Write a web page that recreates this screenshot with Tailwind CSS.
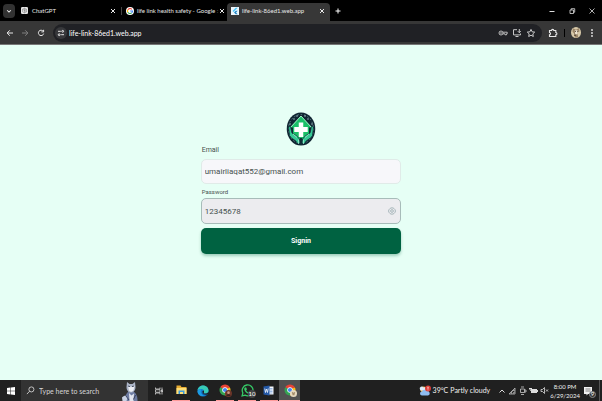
<!DOCTYPE html>
<html lang="en">
<head>
<meta charset="utf-8">
<meta name="viewport" content="width=device-width, initial-scale=1">
<title>life-link-86ed1.web.app</title>
<script src="https://cdn.jsdelivr.net/npm/@tailwindcss/browser@4"></script>
</head>
<body class="flex min-h-screen flex-col bg-[#e6fff5] font-['Lato',sans-serif] text-[7px] leading-none">
<svg class="hidden" aria-hidden="true">
  <symbol id="x" viewBox="0 0 8 8"><path d="M2 2l4 4M6 2L2 6" stroke="currentColor" stroke-width="1" fill="none"/></symbol>
  <symbol id="chrome" viewBox="0 0 24 24">
    <path d="M12 12L2.5 6.5A11 11 0 0 1 21.5 6.5z" fill="#e94335"/>
    <path d="M12 12L21.5 6.5A11 11 0 0 1 12 23z" fill="#fbc116"/>
    <path d="M12 12V23A11 11 0 0 1 2.5 6.5z" fill="#34a353"/>
    <path d="M12 6.500H21.500V8H12z" fill="#e94335"/>
    <circle cx="12" cy="12" r="5.500" fill="#fff"/><circle cx="12" cy="12" r="4.200" fill="#4285f4"/>
  </symbol>
</svg>

<header class="shrink-0 bg-black text-[#e8e8e8]">
  <div class="flex h-[21px] items-center">
    <button aria-label="Search tabs" class="ml-[3px] flex h-[14px] w-[12px] shrink-0 items-center justify-center rounded bg-[#323232]">
      <svg class="size-[6px]" viewBox="0 0 8 8"><path d="M1.500 3l2.500 2.500L6.500 3" fill="none" stroke="currentColor" stroke-width="1.400"/></svg>
    </button>
    <nav class="flex h-full min-w-0 items-center" aria-label="Tabs">
      <div class="flex h-full w-[106px] items-center gap-1 pl-[6px] pr-1">
        <svg class="size-[7px] shrink-0" viewBox="0 0 16 16"><rect width="16" height="16" rx="3" fill="#e6e6e6"/><g fill="none" stroke="#777" stroke-width="1.200"><path d="M8 2.500l4.500 2.700v5.600L8 13.500l-4.500-2.700V5.200z"/><path d="M8 2.500v5.300l4.500 3M3.500 5.200L8 7.800M8 13.500V7.800l4.500-2.600"/></g></svg>
        <a href="#" class="flex-1 whitespace-nowrap text-[6px] leading-[10px]">ChatGPT</a>
        <button aria-label="Close ChatGPT"><svg class="size-[8px]"><use href="#x"/></svg></button>
      </div>
      <span class="h-[8px] w-px bg-[#444]"></span>
      <div class="flex h-full w-[105px] items-center pl-[4px] pr-[5px]">
        <svg class="mr-[3px] size-[8px] shrink-0" viewBox="0 0 24 24"><circle cx="12" cy="12" r="12" fill="#fff"/><g fill="none" stroke-width="3.400"><path d="M5.500 8.500A7.500 7.500 0 0 1 17.500 7" stroke="#ea4335"/><path d="M5.500 15.700a7.500 7.500 0 0 1 0-7.400" stroke="#fbbc05"/><path d="M17 17.600A7.500 7.500 0 0 1 5.500 15.500" stroke="#34a853"/><path d="M12.500 12h7a7.500 7.500 0 0 1-2.600 5.700" stroke="#4285f4"/></g></svg>
        <a href="#" class="flex-1 whitespace-nowrap text-[6px] leading-[10px]">life link health safety - Google <span class="text-[#777]">:</span></a>
        <button aria-label="Close Google Search"><svg class="size-[8px]"><use href="#x"/></svg></button>
      </div>
      <div class="mt-[3px] flex h-[18px] w-[103px] items-center gap-[3px] rounded-t-[4px] bg-[#373737] pb-[3px] pl-[4px] pr-[4px]">
        <svg class="size-[8px] shrink-0" viewBox="0 0 16 16"><rect width="16" height="16" fill="#eef6fb"/><path d="M9.500 1.500L3 8l2 2 8.500-8.500z" fill="#47c5fb"/><path d="M9.500 7.500L6 11l3.500 3.500h4L10 11l3.500-3.500z" fill="#2489c9"/></svg>
        <a href="#" class="flex-1 whitespace-nowrap text-[6px] leading-[10px]">life-link-86ed1.web.app</a>
        <button aria-label="Close life-link"><svg class="size-[8px]"><use href="#x"/></svg></button>
      </div>
    </nav>
    <button aria-label="New tab" class="ml-[4px]"><svg class="size-[8px]" viewBox="0 0 8 8"><path d="M4 1.500v5M1.500 4h5" stroke="#fff"/></svg></button>
    <div class="ml-auto flex shrink-0 gap-[12px] pr-[6px]">
      <button aria-label="Minimize"><svg class="size-[8px]" viewBox="0 0 8 8"><path d="M1.500 4.500h5" stroke="#ddd"/></svg></button>
      <button aria-label="Restore"><svg class="size-[8px]" viewBox="0 0 8 8" fill="none" stroke="#ddd" stroke-width=".8"><path d="M2 3h3.500v3.500H2zM3.200 3V1.700h3.500v3.500H5.500"/></svg></button>
      <button aria-label="Close window"><svg class="size-[8px]" viewBox="0 0 8 8"><path d="M1.500 1.500l5 5M6.500 1.500l-5 5" stroke="#ddd" stroke-width=".8"/></svg></button>
    </div>
  </div>

  <div class="flex h-[24px] items-center border-b border-[#777] bg-[#373737] pl-[5px] pr-[5px]">
    <div class="flex gap-[5px]">
      <button aria-label="Back"><svg class="size-[10px]" viewBox="0 0 10 10" fill="none" stroke="#e8e8e8"><path d="M8 5H2.200M4.800 2.300L2.100 5l2.700 2.700"/></svg></button>
      <button aria-label="Forward"><svg class="size-[10px]" viewBox="0 0 10 10" fill="none" stroke="#808080"><path d="M2 5h5.800M5.200 2.300L7.900 5 5.200 7.700"/></svg></button>
      <button aria-label="Reload" class="ml-px"><svg class="size-[10px]" viewBox="0 0 10 10" fill="none" stroke="#e8e8e8"><path d="M7.200 3.200A2.700 2.700 0 1 0 7.700 5.600M7.600 1.800v2.100H5.400"/></svg></button>
    </div>
    <div class="ml-[7px] flex h-[18px] min-w-0 flex-1 items-center rounded-full bg-[#202125] pl-[2px] pr-[6px]">
      <button aria-label="Site information" class="flex size-[12px] shrink-0 items-center justify-center rounded-full bg-[#37383b]"><svg class="size-[8px]" viewBox="0 0 8 8" fill="none" stroke="#e8e8e8"><path d="M1 2.300h2.800M4.200 5.700H7"/><circle cx="5.700" cy="2.300" r=".9"/><circle cx="2.200" cy="5.700" r=".9"/></svg></button>
      <input aria-label="Address" value="life-link-86ed1.web.app" class="ml-[2px] h-[12px] min-w-0 flex-1 bg-transparent text-[7px] text-white outline-none">
      <div class="flex gap-[4px]">
        <button aria-label="Passwords"><svg class="size-[10px]" viewBox="0 0 10 10" fill="none" stroke="#c9c9c9" stroke-width=".9"><circle cx="3" cy="5" r="2"/><circle cx="3" cy="5" r=".4"/><path d="M4.900 4.200h4.300v1.600H8.500v1H7v-1H4.900"/></svg></button>
        <button aria-label="Install app"><svg class="size-[10px]" viewBox="0 0 10 10" fill="none" stroke="#dadada" stroke-width=".9"><path d="M5 1.700H1.500v5.200h7V5.500M3.500 8.500h3M7.300 1v3.500M5.800 3.200l1.500 1.500 1.500-1.500"/></svg></button>
        <button aria-label="Bookmark"><svg class="size-[10px]" viewBox="0 0 10 10" fill="none" stroke="#dadada" stroke-width=".9"><path d="M5 1.400l1.100 2.400 2.600.3-1.900 1.800.5 2.600L5 7.200 2.700 8.500l.5-2.600-1.900-1.800 2.600-.3z"/></svg></button>
      </div>
    </div>
    <div class="flex items-center gap-[6px] pl-[6px]">
      <button aria-label="Extensions"><svg class="size-[10px]" viewBox="0 0 10 10" fill="none" stroke="#e8e8e8" stroke-width="1.100"><path d="M1.500 2.500h2c0-1.500 2.300-1.500 2.300 0h2v2c1.500 0 1.500 2.300 0 2.300v1.700H1.500V6.700c1.400 0 1.400-2.200 0-2.200z"/></svg></button>
      <span class="h-[8px] w-px bg-black"></span>
      <button aria-label="Profile"><svg class="h-[11px] w-[10px]" viewBox="0 0 10 10" preserveAspectRatio="none"><circle cx="5" cy="5" r="5" fill="#d7c9a9"/><path d="M2 1.200l3 1.300L8 1l.5 3-2 1 .6 4.500H4L3 6 1.500 4z" fill="#9a8568"/><path d="M3.800 3h2.700v3.500H4.200z" fill="#f1e7d4"/><path d="M4 4h1M6 4h.7M3 7.500h2" stroke="#3c3027" stroke-width=".8"/></svg></button>
      <button aria-label="Menu"><svg class="size-[10px]" viewBox="0 0 10 10" fill="#e8e8e8"><circle cx="5" cy="2" r=".9"/><circle cx="5" cy="5" r=".9"/><circle cx="5" cy="8" r=".9"/></svg></button>
    </div>
  </div>
</header>

<main class="flex flex-1 flex-col items-center pt-[67px] font-['Roboto',sans-serif]">
  <form class="flex w-1/3 min-w-[200px] flex-col text-[#46514e]">
    <svg class="h-[34px] w-[30px] self-center" viewBox="0 0 60 68" role="img" aria-label="Life Link">
      <ellipse cx="30" cy="34" rx="28.500" ry="33" fill="#102532"/>
      <ellipse cx="30" cy="34" rx="25" ry="29" fill="none" stroke="#5d8085" stroke-width="2" stroke-dasharray="3 4"/>
      <path d="M30 8L52 31H46V46L30 56 14 46V31H8z" fill="#1bbf68"/>
      <path d="M9 31L30 8 51 31" fill="none" stroke="#a4f0c8" stroke-width="2"/>
      <path d="M25.500 21h9v9h9v10h-9v10h-9V40h-9V30h9z" fill="#fff"/>
      <g fill="#36c994" stroke="#0e2c38" stroke-width="1.500"><path d="M5 30c3-2 5 0 5 4l2 8 8 5c6 4 8 8 8 16h-6c0-7-11-8-15-16z"/><path d="M55 30c-3-2-5 0-5 4l-2 8-8 5c-6 4-8 8-8 16h6c0-7 11-8 15-16z"/></g>
      <path d="M14 44l8 7M46 44l-8 7M25 55v9M35 55v9" stroke="#a9eed4" stroke-width="1.500"/>
      <path d="M30 52v14" stroke="#112b36" stroke-width="4"/>
      <g fill="#a7c4c8"><circle cx="16" cy="14" r="1.500"/><circle cx="22" cy="8" r="1.500"/><circle cx="38" cy="8" r="1.500"/><circle cx="44" cy="14" r="1.500"/><circle cx="8" cy="24" r="1.500"/><circle cx="52" cy="24" r="1.500"/></g>
    </svg>
    <label for="email" class="pl-px text-[7px] leading-[8px]">Email</label>
    <input id="email" type="email" value="umairliaqat552@gmail.com" class="mt-[5px] h-[25px] w-full rounded-[5px] border border-[#e0ebe8] bg-[#f7f7fa] px-[3px] text-[8px] outline-none">
    <label for="password" class="mt-[4px] pl-px text-[6px] leading-[8px]">Password</label>
    <div class="mt-[2px] flex h-[26px] items-center rounded-[5px] border border-[#a7bcb9] bg-[#ececef] pr-[4px]">
      <input id="password" type="text" value="12345678" class="h-full min-w-0 flex-1 bg-transparent px-[3px] text-[8px] outline-none">
      <button type="button" aria-label="Hide password"><svg class="size-[8px]" viewBox="0 0 16 16" fill="none" stroke="#91a5a9" stroke-width="1.500"><path d="M1 8c2-8.500 12-8.500 14 0-2 8.500-12 8.500-14 0z"/><circle cx="8" cy="8" r="2.700"/></svg></button>
    </div>
    <button type="submit" class="mt-[4px] h-[26px] rounded-[5px] bg-[#006241] text-[7px] font-bold text-white shadow-[0_2px_3px_#00624150]">Signin</button>
  </form>
</main>

<footer class="flex h-[21px] shrink-0 items-stretch bg-[#202020] text-[#f0f0f0]">
  <button aria-label="Start" class="flex w-[21px] items-center justify-center"><svg class="size-[8px]" viewBox="0 0 16 16" fill="#fff"><path d="M0 2l7-1v6.500H0zM8 .9L16 0v7.500H8zM0 8.500h7V15l-7-1zM8 8.500h8V16l-8-1z"/></svg></button>
  <label class="flex w-[127px] items-center bg-[#333] pl-[5px] pr-[10px]">
    <svg class="size-[9px] shrink-0" viewBox="0 0 10 10" fill="none" stroke="#e0e0e0" stroke-width=".9"><circle cx="6" cy="3.800" r="2.800"/><path d="M4 5.800L1 9"/></svg>
    <input aria-label="Type here to search" placeholder="Type here to search" class="ml-[4px] h-full min-w-0 flex-1 bg-transparent text-[7px] outline-none placeholder:text-[#d6d6d6]">
    <svg class="h-[20px] w-[16px] shrink-0 self-end" viewBox="0 0 32 40"><path d="M5 40c0-10 5-17 9-20l9 1c7 5 8 12 8 19z" fill="#6d7ba1"/><path d="M0 33c5-6 10-4 11 1l-2 6H1z" fill="#c9d2e4"/><path d="M10 2l5 4h6l5-4 1 10c0 7-4 11-9 11s-9-4-9-11z" fill="#acb5c8"/><path d="M12 10c3-2 4 0 6 3 2-3 4-5 7-3l-2 9-5 3-4-3z" fill="#eef0f5"/><path d="M12 10l4 1M20 11l4-1" stroke="#333c52" stroke-width="2"/><path d="M14 24l5 5 5-4-1 15h-8z" fill="#e3e6ef"/><path d="M8 30l6 8M27 28l-4 9" stroke="#37405c" stroke-width="2"/></svg>
  </label>
  <nav class="flex" aria-label="Taskbar">
    <button aria-label="Task view" class="flex w-[22px] items-center justify-center"><svg class="size-[8px]" viewBox="0 0 16 16" fill="none" stroke="#ddd" stroke-width="1.500"><path d="M1 1v3h9V1M1 5.500h9v5H1zM1 15v-3h9v3M14 1v14M13 6h3v3h-3z"/></svg></button>
    <button aria-label="File Explorer" class="flex w-[22px] items-center justify-center"><span class="flex h-full w-[18px] items-center justify-center border-b border-[#ff9b9b]"><svg class="h-[10px] w-[11px]" viewBox="0 0 22 20"><path d="M1 1h8l2 3h10v14H1z" fill="#e8ac32"/><path d="M1 6h20v12H1z" fill="#ffdf78"/><path d="M5 18v-7h12v7h-3v-4H8v4z" fill="#3d9bdc"/></svg></span></button>
    <button aria-label="Edge" class="flex w-[22px] items-center justify-center"><svg class="size-[12px]" viewBox="0 0 24 24"><circle cx="12" cy="12" r="11" fill="#137ccf"/><path d="M1 11C2 4 7 1 12 1c7 0 11 5 11 10 0 4-3 6-7 6-3 0-3-2-2-3 1-4-2-6-6-6-3 0-6 1-7 3z" fill="#38cbb6"/><path d="M9 9c-3 4-1 10 5 12-7 3-13-2-13-9 2-3 5-4 8-3z" fill="#1b9be4"/><path d="M11 11c-3 5 3 10 11 6l-2 3C13 22 7 17 11 11z" fill="#0c4d91"/><path d="M14 14c-1 2 0 3 2 3 3 0 5-1 7-3l-1 4c-6 3-12 0-11-6l3-1z" fill="#202020"/></svg></button>
    <button aria-label="Chrome" class="flex w-[22px] items-center justify-center"><span class="relative flex h-full w-[18px] items-center justify-center border-b border-[#ff9b9b]"><svg class="size-[12px]"><use href="#chrome"/></svg><svg class="absolute bottom-[3px] right-[2px] size-[7px]" viewBox="0 0 8 8"><circle cx="4" cy="4" r="4" fill="#6b3529"/><circle cx="4" cy="3" r="1.500" fill="#c99680"/><path d="M1.500 6.500c1-2 4-2 5 0z" fill="#271c1b"/></svg></span></button>
    <button aria-label="WhatsApp" class="flex w-[22px] items-center justify-center"><span class="relative flex h-full w-[18px] items-center justify-center border-b border-[#ff9b9b]"><svg class="size-[13px]" viewBox="0 0 24 24"><path d="M2 22l1.500-5.500A10 10 0 1 1 7.500 20.500z" fill="none" stroke="#36ca67" stroke-width="2.400"/><path d="M8 6l2 1 1 3-1.500 1.500c1 2 2 3 4 4L15 14l3 1c0 3-2 4-4 3-4-1-7-4-8-8 0-2 0-3 2-4z" fill="#36ca67"/></svg><span class="absolute bottom-[2px] right-0 flex size-[8px] items-center justify-center rounded-full bg-[#444] text-[6px] text-white">10</span></span></button>
    <button aria-label="Word" class="flex w-[21px] items-center justify-center"><span class="flex h-full w-[18px] items-center justify-center border-b border-[#ff9b9b]"><svg class="size-[11px]" viewBox="0 0 22 22"><path d="M9 3h12v16H9z" fill="#f5f8fd"/><path d="M13 7h6M13 10h6M13 13h6M13 16h6" stroke="#3e76c4"/><path d="M1 3l12-2v20L1 19z" fill="#2459a8"/><path d="M3.500 7l1.500 8 2-7 2 7 1.500-8" fill="none" stroke="#fff" stroke-width="1.500"/></svg></span></button>
    <button aria-label="Chrome, active" class="relative flex w-[21px] items-center justify-center border-b border-[#ffadad] bg-[#515151]"><svg class="size-[12px]"><use href="#chrome"/></svg><svg class="absolute bottom-[3px] right-[3px] size-[7px]" viewBox="0 0 8 8"><circle cx="4" cy="4" r="4" fill="#e5d9c0"/><path d="M2 2l2 1 2-1-1 4H3z" fill="#a38c6b"/></svg></button>
  </nav>
  <div class="ml-auto flex items-center">
    <button class="flex items-center gap-[2px] whitespace-nowrap text-[7px]">
      <svg class="size-[12px]" viewBox="0 0 24 24"><circle cx="9" cy="9" r="6" fill="#f6b63e"/><path d="M2 9a4 4 0 0 1 7-4 4 4 0 0 1 5 6H3z" fill="#dcecfb"/><path d="M6 21a4 4 0 0 1 0-8 5 5 0 0 1 9-1 4.500 4.500 0 0 1 3 9z" fill="#8fbcf0"/><circle cx="18" cy="7" r="6" fill="#dc3d37"/><path d="M18 3.500v4M18 9v1.500" stroke="#fff" stroke-width="1.800"/></svg>
      <span>39°C</span><span>Partly cloudy</span>
    </button>
    <div class="ml-[8px] flex items-center gap-[2px]">
      <button aria-label="Hidden icons"><svg class="size-[8px]" viewBox="0 0 8 8" fill="none" stroke="#ddd"><path d="M1.500 5.500L4 3l2.500 2.500"/></svg></button>
      <svg class="size-[8px]" viewBox="0 0 8 8" fill="none" stroke="#bbb" stroke-width=".8"><path d="M1 7L7 1v6zM3 7a4 4 0 0 1 4-4M5 7a2 2 0 0 1 2-2"/></svg>
      <svg class="size-[9px]" viewBox="0 0 9 9" fill="none" stroke="#ccc" stroke-width=".8"><path d="M2.500 3h4v3.500h-4zM3 1h3M3 8.500h3M6.500 4H8v2H6.500"/></svg>
      <svg class="size-[9px]" viewBox="0 0 9 9"><path d="M2 3h6v4H2z" fill="#ddd"/><path d="M8 4h1v2H8zM0 2h3v1.500H0zM1 3v2h1" fill="#ddd"/></svg>
      <svg class="size-[9px]" viewBox="0 0 9 9" fill="none" stroke="#ddd" stroke-width=".8"><path d="M1 3.500h1.500l2-2v6l-2-2H1zM6 3.500l2 2M8 3.500l-2 2"/></svg>
    </div>
    <div class="ml-px whitespace-nowrap text-center text-[6px] leading-[9px]"><div>8:00 PM</div><div>6/29/2024</div></div>
    <button aria-label="Notifications" class="relative ml-[3px] mr-[4px] h-[12px] w-[12px]"><svg class="size-[10px]" viewBox="0 0 10 10"><path d="M1 1h8v7H5L3.500 9.500V8H1z" fill="#f1f1f1"/><path d="M2.500 3h5M2.500 5h5" stroke="#555" stroke-width=".7"/></svg><span class="absolute -bottom-px -right-px flex size-[7px] items-center justify-center rounded-full border border-[#888] bg-[#333] text-[6px] text-white">9</span></button>
    <span class="mr-[2px] h-[21px] w-px bg-[#555]"></span>
  </div>
</footer>
</body>
</html>
